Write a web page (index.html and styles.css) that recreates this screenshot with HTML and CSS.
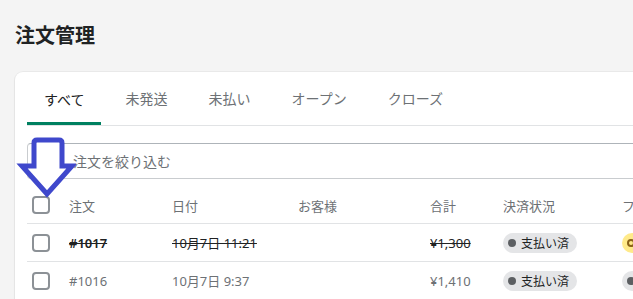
FILE: index.html
```
<!DOCTYPE html>
<html lang="ja">
<head>
    <meta charset="UTF-8">
    <meta name="viewport" content="width=device-width, initial-scale=1.0">
    <title>注文管理</title>
    <link rel="stylesheet" href="styles.css">
</head>
<body>

    <h1 class="page-title">注文管理</h1>

    <div class="card">
        <div class="tabs">
            <div class="tab active">すべて</div>
            <div class="tab">未発送</div>
            <div class="tab">未払い</div>
            <div class="tab">オープン</div>
            <div class="tab">クローズ</div>
        </div>

        <div class="filter">
            <span class="filter-icon"></span>
            <span class="filter-text">注文を絞り込む</span>
        </div>

        <div class="table">
            <div class="row head">
                <div class="cell"><span class="checkbox"></span></div>
                <div class="cell">注文</div>
                <div class="cell">日付</div>
                <div class="cell">お客様</div>
                <div class="cell">合計</div>
                <div class="cell">決済状況</div>
                <div class="cell">フルフィルメント</div>
            </div>
            <div class="row closed">
                <div class="cell"><span class="checkbox"></span></div>
                <div class="cell order">#1017</div>
                <div class="cell">10月7日 11:21</div>
                <div class="cell"></div>
                <div class="cell">¥1,300</div>
                <div class="cell"><span class="badge"><i class="dot"></i>支払い済</span></div>
                <div class="cell"><span class="badge yellow"><i class="ring"></i>未発送</span></div>
            </div>
            <div class="row">
                <div class="cell"><span class="checkbox"></span></div>
                <div class="cell">#1016</div>
                <div class="cell">10月7日 9:37</div>
                <div class="cell"></div>
                <div class="cell">¥1,410</div>
                <div class="cell"><span class="badge"><i class="dot"></i>支払い済</span></div>
                <div class="cell"><span class="badge"><i class="dot"></i>発送済</span></div>
            </div>
        </div>

        <!-- annotation arrow drawn over the filter field -->
        <svg class="arrow" width="60" height="70" viewBox="0 0 60 70">
            <path d="M18 8 Q18 5 21 5 L43 5 Q46 5 46 8 L46 31 L56 31 L31 59 L6 31 L18 31 Z"
                  fill="#fff" stroke="#3f48cc" stroke-width="5" stroke-linejoin="miter"/>
        </svg>
    </div>

</body>
</html>
```
FILE: styles.css
```
body {
    font-family: "Noto Sans", "Noto Sans CJK JP", sans-serif;
    background-color: #f4f4f4;
    color: #202223;
    margin: 0;
    padding: 22px 0 0 15px;
    overflow: hidden;
}
.page-title {
    margin: 0;
    font-size: 20px;
    line-height: 28px;
    font-weight: 700;
}
.card {
    position: relative;
    margin-top: 22px;
    width: 700px;
    height: 260px;
    background-color: #fff;
    border-radius: 8px;
    box-shadow: 0 0 0 1px rgba(0, 0, 0, 0.04), 0 1px 2px rgba(0, 0, 0, 0.08);
    padding: 0 0 0 12px;
    box-sizing: border-box;
}
.tabs {
    display: flex;
    gap: 7px;
    border-bottom: 1px solid #e1e3e5;
}
.tab {
    padding: 0 17px;
    height: 53px;
    line-height: 53px;
    font-size: 14px;
    color: #6d7175;
    box-sizing: border-box;
}
.tab.active {
    color: #202223;
    border-bottom: 3px solid #008060;
    line-height: 56px;
}
.filter {
    display: flex;
    align-items: center;
    margin-top: 17px;
    height: 36px;
    border: 1px solid #c9cccf;
    border-top-color: #aeb4b9;
    border-right: none;
    border-radius: 4px 0 0 4px;
    box-sizing: border-box;
}
.filter-icon {
    width: 45px;
}
.filter-text {
    font-size: 14px;
    color: #6d7175;
}
.table {
    margin-top: 8px;
}
.row {
    display: grid;
    grid-template-columns: 42px 103px 126px 132px 73px 119px 120px;
    height: 37px;
    align-items: center;
    border-bottom: 1px solid #e1e3e5;
    font-size: 13px;
    color: #6d7175;
    white-space: nowrap;
}
.row.head {
    height: 36px;
}
.row.closed {
    color: #202223;
}
.row.closed .cell {
    text-decoration: line-through;
}
.row.closed .cell .badge {
    text-decoration: none;
}
.order {
    font-weight: 600;
}
.checkbox {
    display: block;
    width: 18px;
    height: 18px;
    margin-left: 5px;
    border: 2px solid #8c9196;
    border-radius: 4px;
    box-sizing: border-box;
}
.badge {
    display: inline-flex;
    align-items: center;
    height: 20px;
    padding: 0 8px 0 5px;
    border-radius: 10px;
    background-color: #e4e5e7;
    color: #202223;
    font-size: 12px;
}
.badge.yellow {
    background-color: #ffea8a;
}
.dot {
    width: 8px;
    height: 8px;
    border-radius: 50%;
    background-color: #5c5f62;
    margin-right: 5px;
}
.ring {
    width: 8px;
    height: 8px;
    border-radius: 50%;
    border: 2px solid #8a6116;
    box-sizing: border-box;
    margin-right: 5px;
}
.arrow {
    position: absolute;
    left: 1px;
    top: 63px;
}
```
